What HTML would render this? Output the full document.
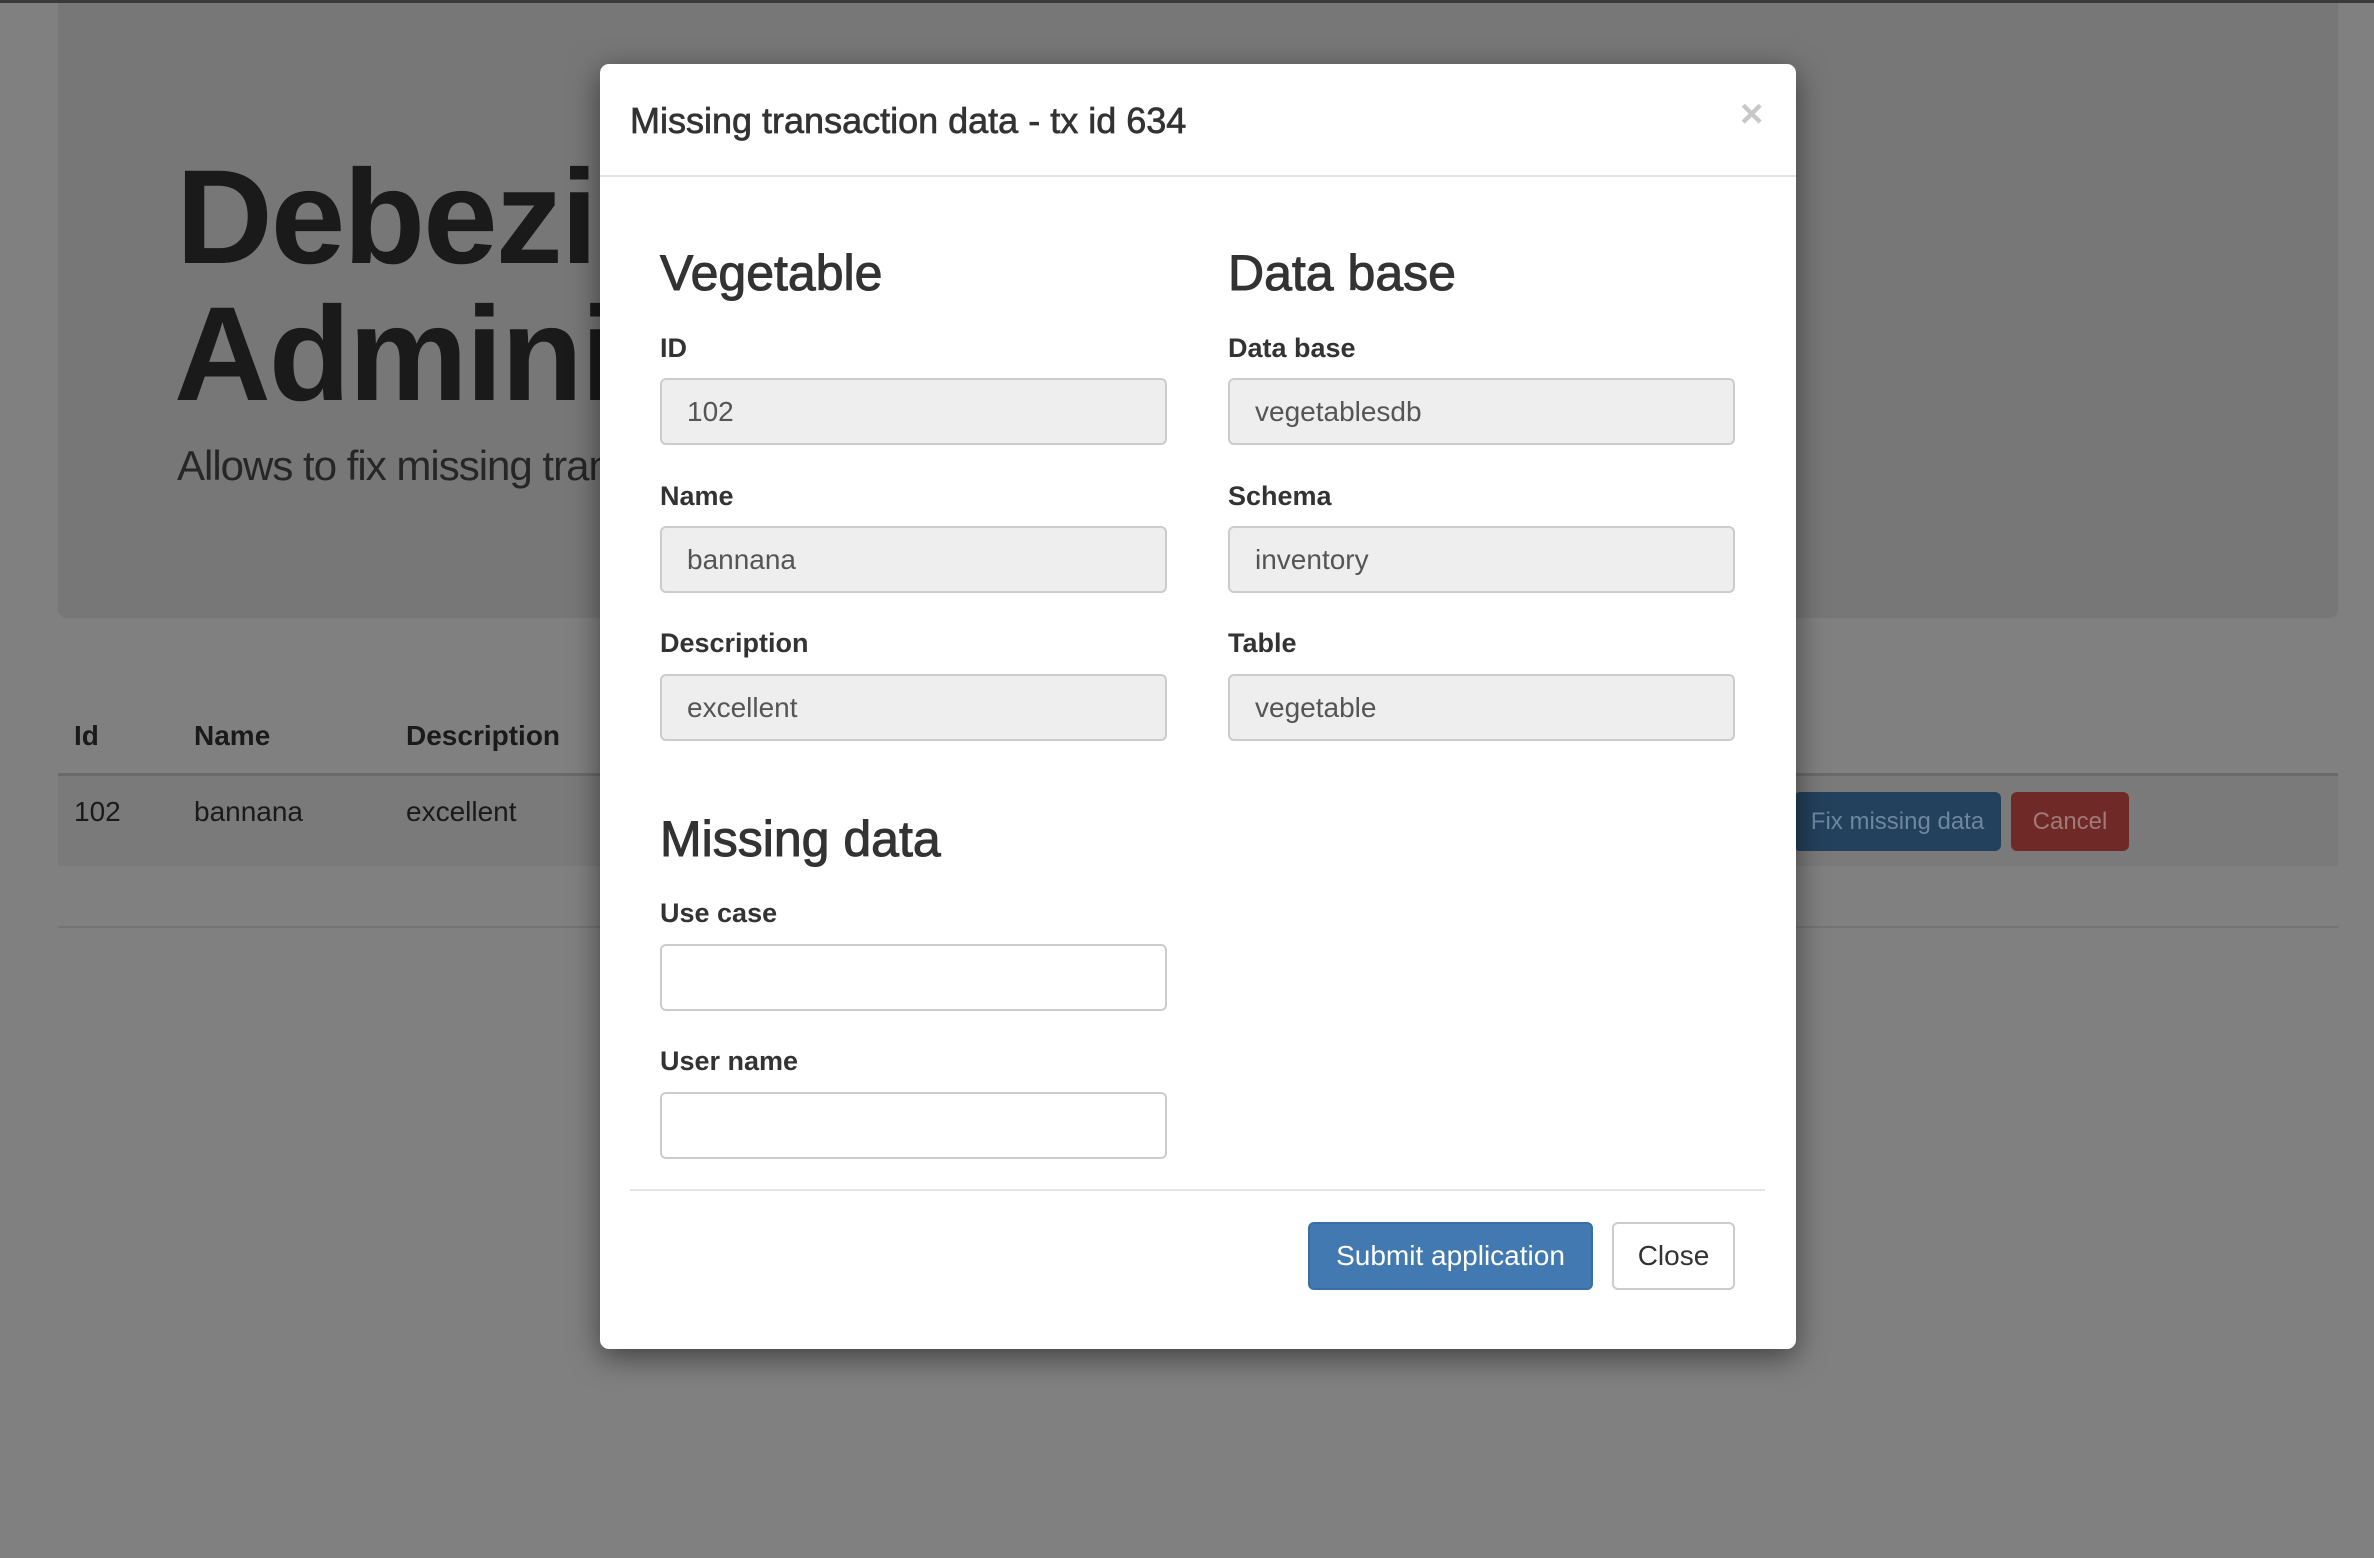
<!DOCTYPE html>
<html><head><meta charset="utf-8"><style>
*{box-sizing:border-box;margin:0;padding:0}
body{width:2374px;height:1558px;background:#808080;font-family:"Liberation Sans",Arial,sans-serif;color:#333;position:relative;overflow:hidden}
.a{position:absolute;white-space:nowrap}
.topline{left:0;top:0;width:2374px;height:3px;background:#3a3a3a}
.jumbo{left:58px;top:0;width:2280px;height:618px;background:#777;border-radius:0 0 9px 9px}
.h1{font-size:134px;font-weight:bold;color:#1a1a1a;letter-spacing:-2px;line-height:136px}
.lead{font-size:42px;color:#262626;letter-spacing:-1px}
.th{font-size:28px;font-weight:bold;color:#1a1a1a}
.td{font-size:28px;color:#1a1a1a}
.modal{left:600px;top:64px;width:1196px;height:1285px;background:#fff;border-radius:9px;box-shadow:0 8px 30px rgba(0,0,0,.5)}
.hr{background:#e5e5e5;height:2px}
.title{font-size:36px;color:#333;-webkit-text-stroke:0.7px #333}
.h3{font-size:50px;color:#333;-webkit-text-stroke:1px #333}
.lbl{font-size:27px;font-weight:bold;color:#333}
.inp{width:507px;height:67px;border:2px solid #ccc;border-radius:6px;background:#eee;font-size:28px;padding-left:25px;line-height:63px;color:#555}
.inp.w{background:#fff}
.btn{border-radius:6px;font-size:28px;text-align:center}
</style></head><body>
<div class="a jumbo"></div>
<div class="a topline"></div>
<div class="a h1" style="left:176px;top:150px">Debezium</div>
<div class="a h1" style="left:174px;top:287px">Administration</div>
<div class="a lead" style="left:177px;top:442px">Allows to fix missing transactions</div>
<div class="a th" style="left:74px;top:720px">Id</div>
<div class="a th" style="left:194px;top:720px">Name</div>
<div class="a th" style="left:406px;top:720px">Description</div>
<div class="a" style="left:58px;top:773px;width:2280px;height:3px;background:#6a6a6a"></div>
<div class="a" style="left:58px;top:776px;width:2280px;height:90px;background:#7a7a7a"></div>
<div class="a td" style="left:74px;top:796px">102</div>
<div class="a td" style="left:194px;top:796px">bannana</div>
<div class="a td" style="left:406px;top:796px">excellent</div>
<div class="a btn" style="left:1794px;top:792px;width:207px;height:59px;background:#23405c;color:#6f86a0;font-size:24px;line-height:59px">Fix missing data</div>
<div class="a btn" style="left:2011px;top:792px;width:118px;height:59px;background:#6f2a28;color:#a07a78;font-size:24px;line-height:59px">Cancel</div>
<div class="a" style="left:58px;top:926px;width:2280px;height:2px;background:#747474"></div>

<div class="a modal"></div>
<div class="a title" style="left:630px;top:100px">Missing transaction data - tx id 634</div>
<div class="a" style="left:1740px;top:92px;font-size:40px;font-weight:bold;color:#c8c8c8">×</div>
<div class="a hr" style="left:600px;top:175px;width:1196px"></div>

<div class="a h3" style="left:660px;top:244px">Vegetable</div>
<div class="a h3" style="left:1228px;top:244px">Data base</div>
<div class="a lbl" style="left:660px;top:333px">ID</div>
<div class="a lbl" style="left:1228px;top:333px">Data base</div>
<div class="a inp" style="left:660px;top:378px">102</div>
<div class="a inp" style="left:1228px;top:378px">vegetablesdb</div>
<div class="a lbl" style="left:660px;top:481px">Name</div>
<div class="a lbl" style="left:1228px;top:481px">Schema</div>
<div class="a inp" style="left:660px;top:526px">bannana</div>
<div class="a inp" style="left:1228px;top:526px">inventory</div>
<div class="a lbl" style="left:660px;top:628px">Description</div>
<div class="a lbl" style="left:1228px;top:628px">Table</div>
<div class="a inp" style="left:660px;top:674px">excellent</div>
<div class="a inp" style="left:1228px;top:674px">vegetable</div>
<div class="a h3" style="left:660px;top:810px">Missing data</div>
<div class="a lbl" style="left:660px;top:898px">Use case</div>
<div class="a inp w" style="left:660px;top:944px"></div>
<div class="a lbl" style="left:660px;top:1046px">User name</div>
<div class="a inp w" style="left:660px;top:1092px"></div>
<div class="a hr" style="left:630px;top:1189px;width:1135px"></div>
<div class="a btn" style="left:1308px;top:1222px;width:285px;height:68px;background:#4279b1;border:2px solid #3a6ea3;color:#fff;line-height:64px">Submit application</div>
<div class="a btn" style="left:1612px;top:1222px;width:123px;height:68px;background:#fff;border:2px solid #ccc;color:#333;line-height:64px">Close</div>
</body></html>
